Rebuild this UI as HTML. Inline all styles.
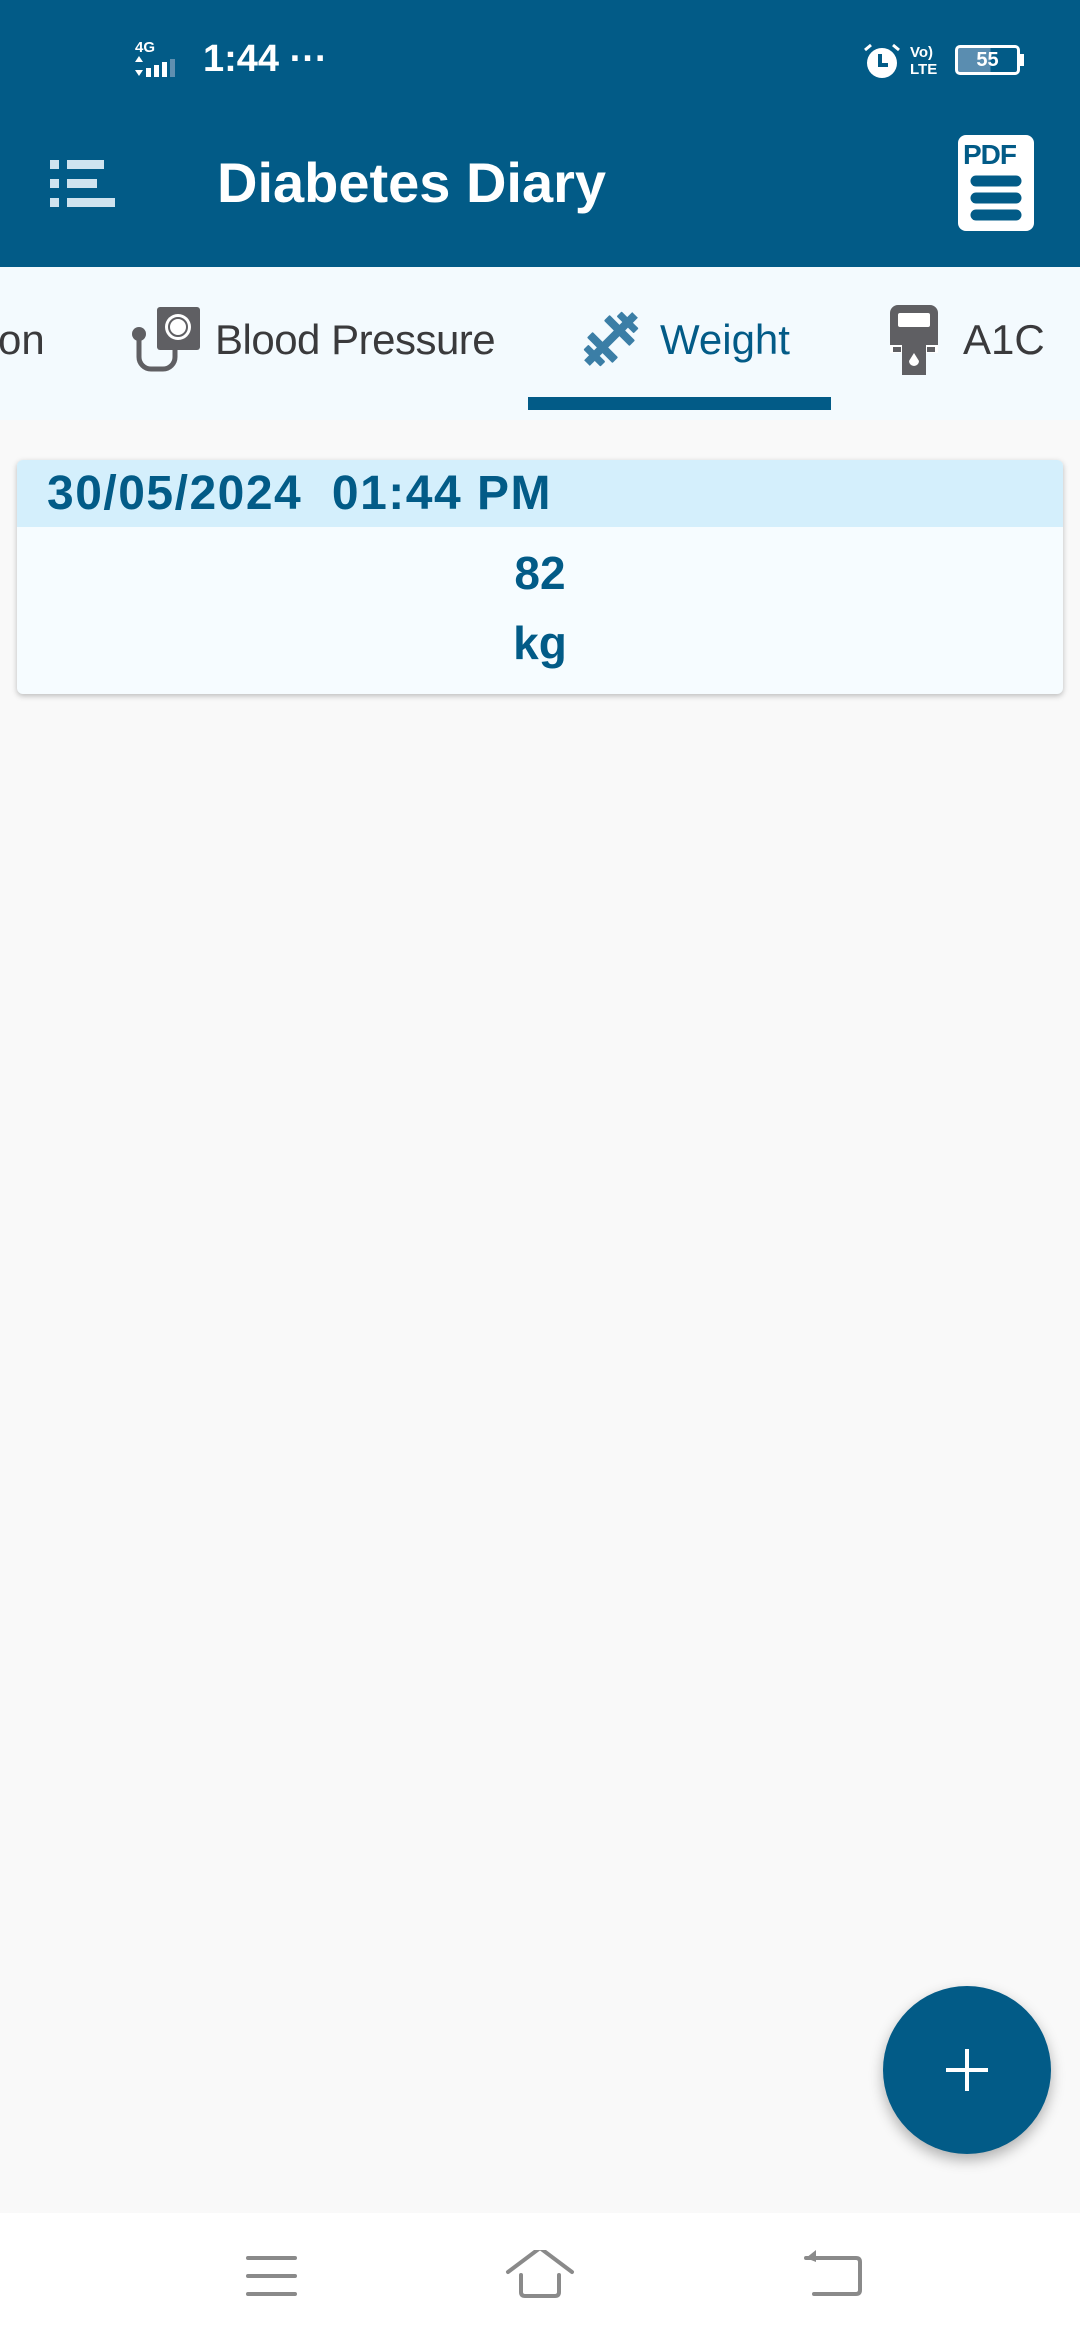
<!DOCTYPE html>
<html><head><meta charset="utf-8"><style>
*{margin:0;padding:0;box-sizing:border-box}
body{width:1080px;height:2340px;background:#f9f9f9;font-family:"Liberation Sans",sans-serif;position:relative;overflow:hidden}
.abs{position:absolute}
#top{left:0;top:0;width:1080px;height:267px;background:#025b87}
#tabs{left:0;top:267px;width:1080px;height:153px;background:#f3fafe}
.tab{position:absolute;top:312px;font-size:42px;color:#3a3a3c;line-height:56px}
#card{left:17px;top:460px;width:1046px;height:234px;background:#f6fcff;border-radius:6px;box-shadow:0 2px 6px rgba(0,0,0,.25);overflow:hidden}
#card .hd{height:67px;background:#d4effc;color:#025b87;font-weight:bold;font-size:48px;letter-spacing:1.5px;line-height:67px;padding-left:30px}
.v{color:#025b87;font-weight:bold;font-size:46px;text-align:center;line-height:70px}
#fab{left:883px;top:1986px;width:168px;height:168px;border-radius:50%;background:#025b87;box-shadow:0 6px 14px rgba(0,0,0,.3)}
#nav{left:0;top:2213px;width:1080px;height:127px;background:#fff}
</style></head><body>
<div id="top" class="abs"></div>
<div class="abs" style="left:135px;top:40px;color:#fff;font-size:15px;font-weight:bold;line-height:15px">4G</div>
<svg class="abs" style="left:135px;top:56px" width="55" height="22"><path d="M4 0l4 6H0z M4 20l4-6H0z" fill="#fff"/><rect x="11" y="12" width="5" height="9" fill="#fff"/><rect x="19" y="9" width="5" height="12" fill="#fff"/><rect x="27" y="6" width="5" height="15" fill="#fff"/><rect x="35" y="3" width="5" height="18" fill="#5f8fb0"/></svg>
<div class="abs" style="left:203px;top:38px;color:#fff;font-size:38px;font-weight:bold">1:44 ···</div>
<svg class="abs" style="left:862px;top:42px" width="40" height="40"><circle cx="20" cy="21" r="15" fill="#fff"/><path d="M18 12v11h8" stroke="#025b87" stroke-width="4" fill="none"/><path d="M3 8l6-5M37 8l-6-5" stroke="#fff" stroke-width="3"/></svg>
<div class="abs" style="left:910px;top:44px;color:#fff;font-size:15px;font-weight:bold;line-height:17px">Vo)<br>LTE</div>
<div class="abs" style="left:955px;top:45px;width:65px;height:30px;border:3px solid #fff;border-radius:5px;color:#fff;font-size:20px;font-weight:bold;text-align:center;line-height:24px;background:linear-gradient(90deg,#5a8db0 55%,transparent 55%)">55</div>
<div class="abs" style="left:1020px;top:54px;width:4px;height:12px;background:#fff"></div>
<svg class="abs" style="left:50px;top:160px" width="70" height="50"><g fill="#cfe3ef"><rect x="0" y="0" width="9" height="9"/><rect x="0" y="19" width="9" height="9"/><rect x="0" y="38" width="9" height="9"/><rect x="17" y="0" width="37" height="9"/><rect x="17" y="19" width="30" height="9"/><rect x="17" y="38" width="48" height="9"/></g></svg>
<div class="abs" style="left:217px;top:148px;color:#fff;font-size:56px;font-weight:bold;line-height:70px">Diabetes Diary</div>
<div class="abs" style="left:958px;top:135px;width:76px;height:96px;background:#fff;border-radius:8px"></div>
<div class="abs" style="left:963px;top:139px;color:#025b87;font-size:28px;font-weight:bold;letter-spacing:-1px">PDF</div>
<svg class="abs" style="left:964px;top:168px" width="64" height="60"><g stroke="#025b87" stroke-width="11" stroke-linecap="round"><line x1="12" y1="13" x2="52" y2="13"/><line x1="12" y1="30" x2="52" y2="30"/><line x1="12" y1="47" x2="52" y2="47"/></g></svg>
<div id="tabs" class="abs"></div>
<div class="tab" style="left:-2px">on</div>
<svg class="abs" style="left:132px;top:307px" width="70" height="66"><rect x="25" y="0" width="43" height="43" rx="3" fill="#5f5f63"/><circle cx="46" cy="20" r="13" fill="#fff"/><circle cx="46" cy="20" r="9" fill="none" stroke="#5f5f63" stroke-width="2"/><circle cx="7" cy="27" r="7" fill="#5f5f63"/><path d="M7 30v20a12 12 0 0 0 12 12h12a12 12 0 0 0 12-12v-8" stroke="#5f5f63" stroke-width="5" fill="none"/></svg>
<div class="tab" style="left:215px;letter-spacing:-0.5px">Blood Pressure</div>
<svg class="abs" style="left:575px;top:303px" width="72" height="72"><g fill="#3b7ea6" transform="rotate(-45 36 36)"><rect x="14" y="32" width="44" height="8"/><rect x="20" y="18" width="8" height="36" rx="1"/><rect x="44" y="18" width="8" height="36" rx="1"/><rect x="9" y="24" width="7" height="24" rx="1"/><rect x="56" y="24" width="7" height="24" rx="1"/><rect x="2" y="32" width="8" height="8"/><rect x="62" y="32" width="8" height="8"/></g></svg>
<div class="tab" style="left:660px;color:#025b87">Weight</div>
<svg class="abs" style="left:888px;top:305px" width="56" height="70"><rect x="2" y="0" width="48" height="48" rx="8" fill="#5f5f63"/><rect x="10" y="8" width="32" height="14" rx="2" fill="#fff"/><rect x="2" y="40" width="48" height="8" fill="#fff"/><rect x="5" y="42" width="8" height="5" fill="#5f5f63"/><rect x="39" y="42" width="8" height="5" fill="#5f5f63"/><rect x="14" y="40" width="24" height="30" fill="#5f5f63"/><path d="M26 48l-5 8a5 5 0 0 0 10 0z" fill="#fff"/></svg>
<div class="tab" style="left:963px">A1C</div>
<div class="abs" style="left:528px;top:397px;width:303px;height:13px;background:#025b87"></div>
<div id="card" class="abs"><div class="hd">30/05/2024&nbsp; 01:44 PM</div><div class="v" style="margin-top:11px">82</div><div class="v">kg</div></div>
<div id="fab" class="abs"></div>
<div class="abs" style="left:946px;top:2068px;width:42px;height:4px;background:#fff"></div>
<div class="abs" style="left:965px;top:2049px;width:4px;height:42px;background:#fff"></div>
<div id="nav" class="abs"></div>
<svg class="abs" style="left:240px;top:2250px" width="640" height="60"><g stroke="#8a8a8a" stroke-width="4" fill="none" stroke-linecap="round"><line x1="8" y1="8" x2="55" y2="8"/><line x1="8" y1="26" x2="55" y2="26"/><line x1="8" y1="44" x2="55" y2="44"/><path d="M268 22l32-24 32 24M281 25v17q0 4 4 4h30q4 0 4-4v-17"/><path d="M566 8h50q4 0 4 4v28q0 4-4 4h-42"/></g><path d="M566 8l10-8v12z" fill="#8a8a8a"/></svg>
</body></html>
